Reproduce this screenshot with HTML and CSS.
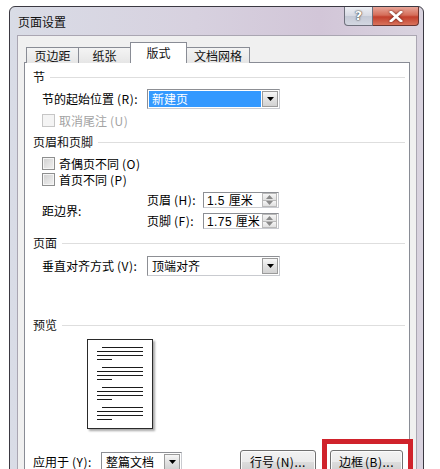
FILE: index.html
```html
<!DOCTYPE html>
<html>
<head>
<meta charset="utf-8">
<title>页面设置</title>
<link rel="stylesheet" href="styles.css">
</head>
<body>
<div class="window">
  <div class="titlebar">
    <span class="title">页面设置</span>
    <div class="controls">
      <div class="btn-help">?</div>
      <div class="btn-close">
        <svg width="14" height="11" viewBox="0 0 14 11"><path d="M2 1 L12 10 M12 1 L2 10" stroke="#fff" stroke-width="2.8" stroke-linecap="square"/></svg>
      </div>
    </div>
  </div>
  <div class="client">
    <div class="tabs">
      <div class="tab t1">页边距</div>
      <div class="tab t2">纸张</div>
      <div class="tab t3 active">版式</div>
      <div class="tab t4">文档网格</div>
    </div>
    <div class="panel">
      <div class="ghead g1"><span>节</span><i class="rule"></i></div>
      <div class="row r-start">
        <span class="label">节的起始位置<span class="mn">(R):</span></span>
        <div class="select">
          <span class="sel-text hl">新建页</span>
          <span class="drop"><svg width="7" height="4" viewBox="0 0 7 4"><path d="M0 0 H7 L3.5 4 Z" fill="#000"/></svg></span>
        </div>
      </div>
      <div class="check-row disabled r-endnote">
        <span class="box"></span><span>取消尾注<span class="mn">(U)</span></span>
      </div>
      <div class="ghead g2"><span>页眉和页脚</span><i class="rule"></i></div>
      <div class="check-row r-odd">
        <span class="box"></span><span>奇偶页不同<span class="mn">(O)</span></span>
      </div>
      <div class="check-row r-first">
        <span class="box"></span><span>首页不同<span class="mn">(P)</span></span>
      </div>
      <div class="margins">
        <span class="label">距边界:</span>
        <div class="spins">
          <div class="spin-row">
            <span class="slabel">页眉<span class="mn">(H):</span></span>
            <div class="spin"><span class="spin-text"><span class="num">1.5 </span>厘米</span><span class="arrows"><span class="up"><svg width="7" height="4" viewBox="0 0 7 4"><path d="M0 4 H7 L3.5 0 Z" fill="#8a8a8a"/></svg></span><span class="down"><svg width="7" height="4" viewBox="0 0 7 4"><path d="M0 0 H7 L3.5 4 Z" fill="#8a8a8a"/></svg></span></span></div>
          </div>
          <div class="spin-row">
            <span class="slabel">页脚<span class="mn">(F):</span></span>
            <div class="spin"><span class="spin-text"><span class="num">1.75 </span>厘米</span><span class="arrows"><span class="up"><svg width="7" height="4" viewBox="0 0 7 4"><path d="M0 4 H7 L3.5 0 Z" fill="#8a8a8a"/></svg></span><span class="down"><svg width="7" height="4" viewBox="0 0 7 4"><path d="M0 0 H7 L3.5 4 Z" fill="#8a8a8a"/></svg></span></span></div>
          </div>
        </div>
      </div>
      <div class="ghead g3"><span>页面</span><i class="rule"></i></div>
      <div class="row r-valign">
        <span class="label">垂直对齐方式<span class="mn">(V):</span></span>
        <div class="select">
          <span class="sel-text">顶端对齐</span>
          <span class="drop"><svg width="7" height="4" viewBox="0 0 7 4"><path d="M0 0 H7 L3.5 4 Z" fill="#000"/></svg></span>
        </div>
      </div>
      <div class="ghead g4"><span>预览</span><i class="rule"></i></div>
      <div class="preview">
        <div class="page">
          <div class="para"><i class="ln first"></i><i class="ln"></i><i class="ln"></i><i class="ln short"></i></div>
          <div class="para"><i class="ln first"></i><i class="ln"></i><i class="ln"></i><i class="ln short"></i></div>
          <div class="para"><i class="ln first"></i><i class="ln"></i><i class="ln"></i><i class="ln short"></i></div>
          <div class="para"><i class="ln first"></i><i class="ln"></i><i class="ln"></i><i class="ln short"></i></div>
        </div>
      </div>
      <div class="bottom">
        <span class="blabel">应用于<span class="mn">(Y):</span></span>
        <div class="select small">
          <span class="sel-text">整篇文档</span>
          <span class="drop"><svg width="7" height="4" viewBox="0 0 7 4"><path d="M0 0 H7 L3.5 4 Z" fill="#000"/></svg></span>
        </div>
        <div class="button b-line">行号<span class="mn">(N)...</span></div>
        <div class="btn-wrap">
          <div class="button b-border">边框<span class="mn">(B)...</span></div>
          <div class="mark"></div>
        </div>
      </div>
    </div>
  </div>
</div>
</body>
</html>
```

FILE: styles.css
```css
* { box-sizing: border-box; }
html, body { margin: 0; padding: 0; }
body {
  width: 440px;
  height: 469px;
  overflow: hidden;
  background: #fff;
  font-family: "Noto Sans CJK SC", "Noto Sans", sans-serif;
  font-size: 12px;
  color: #000;
}
.mn { margin-left: 3px; letter-spacing: 0.5px; }
.num {
  font-family: "Liberation Sans", Arial, sans-serif;
  font-size: 12px;
  letter-spacing: 0.4px;
}
.window {
  margin: 6px 0 0 9px;
  width: 415px;
  height: 480px;
  border: 1px solid #3b3942;
  border-radius: 6px 6px 0 0;
  background: linear-gradient(to right, #d9dce6 0%, #d7d1df 45%, #d2c6d8 75%, #d9d3df 100%);
  display: flex;
  flex-direction: column;
}
.titlebar {
  height: 28px;
  display: flex;
  align-items: flex-start;
}
.title {
  padding: 7px 0 0 8px;
  line-height: 16px;
  color: #111;
}
.controls {
  margin-left: auto;
  margin-right: 4px;
  display: flex;
}
.btn-help {
  width: 29px;
  height: 19px;
  border: 1px solid #6e707c;
  border-top: none;
  border-radius: 0 0 0 4px;
  background: linear-gradient(#eef0f5, #d6d9e2 50%, #c4c9d5 51%, #d3d7e1);
  color: #fff;
  font-family: "DejaVu Sans", sans-serif;
  font-weight: bold;
  font-size: 13px;
  line-height: 18px;
  text-align: center;
  text-shadow: 0 0 2px #333, 0 0 1px #333;
}
.btn-close {
  width: 46px;
  height: 19px;
  border: 1px solid #6b3530;
  border-top: none;
  border-left: none;
  border-radius: 0 0 4px 0;
  background: linear-gradient(#e8a598, #d56e5a 45%, #c23f2c 55%, #d9735c);
  display: flex;
  align-items: center;
  justify-content: center;
}
.btn-close svg { filter: drop-shadow(0 0 1px #5a1a12); }
.client {
  flex: 1;
  margin: 0 6px 0 7px;
  background: #f0f0f0;
  border: 1px solid #aaa6b2;
  padding: 6px 6px 0 6px;
  display: flex;
  flex-direction: column;
}
.tabs {
  height: 21px;
  display: flex;
  align-items: flex-end;
  margin-bottom: -1px;
  padding-left: 2px;
  position: relative;
  z-index: 1;
}
.tab {
  height: 16px;
  border: 1px solid #898c95;
  border-bottom: none;
  background: linear-gradient(#f4f4f4, #e6e6e6);
  text-align: center;
  line-height: 15px;
  margin-left: -1px;
  color: #111;
}
.t1 { width: 53px; margin-left: 0; }
.t2 { width: 53px; }
.t3 { width: 57px; }
.t4 { width: 64px; }
.tab.active {
  height: 21px;
  background: #fff;
  line-height: 20px;
  position: relative;
  z-index: 2;
}
.panel {
  flex: 1;
  background: #fff;
  border: 1px solid #898c95;
  display: flex;
  flex-direction: column;
}
.ghead {
  height: 14px;
  line-height: 14px;
  display: flex;
  align-items: center;
  padding: 0 4px 0 8px;
  color: #111;
}
.ghead .rule {
  flex: 1;
  height: 1px;
  background: #dedede;
  margin-left: 5px;
}
.g1 { margin-top: 7px; }
.g2 { margin-top: 7px; }
.g3 { margin-top: 7px; }
.g4 { margin-top: 42px; }
.row {
  height: 20px;
  display: flex;
  align-items: center;
  padding-left: 17px;
}
.r-start { margin-top: 5px; }
.r-valign { margin-top: 6px; }
.label {
  width: 105px;
  line-height: 16px;
}
.select {
  width: 133px;
  height: 20px;
  border: 1px solid #8d8f94;
  border-right-color: #c9cbd0;
  border-bottom-color: #c9cbd0;
  background: #fff;
  display: flex;
  align-items: center;
  padding: 1px;
}
.sel-text {
  flex: 1;
  height: 16px;
  line-height: 16px;
  padding-left: 3px;
}
.sel-text.hl {
  background: #3399ff;
  color: #fff;
  margin-right: 1px;
}
.drop {
  width: 16px;
  height: 16px;
  border: 1px solid #9b9b9b;
  background: linear-gradient(#f7f7f7, #e2e2e2 50%, #d2d2d2);
  display: flex;
  align-items: center;
  justify-content: center;
}
.check-row {
  height: 15px;
  display: flex;
  align-items: center;
  padding-left: 17px;
  line-height: 15px;
}
.r-endnote { margin-top: 4px; }
.r-odd { margin-top: 7px; }
.r-first { margin-top: 1px; }
.box {
  width: 13px;
  height: 13px;
  border: 1px solid #8e8f8f;
  background: linear-gradient(135deg, #cfcfcf, #f2f2f2);
  box-shadow: inset 0 0 0 1px #f5f5f5;
  margin-right: 4px;
}
.check-row.disabled { color: #a3a3a3; }
.check-row.disabled .box {
  border-color: #c6c6c6;
  background: #f4f4f4;
  box-shadow: none;
}
.margins {
  margin-top: 5px;
  height: 37px;
  display: flex;
  align-items: center;
  padding-left: 17px;
}
.spins {
  display: flex;
  flex-direction: column;
  gap: 5px;
}
.spin-row {
  height: 16px;
  display: flex;
  align-items: center;
}
.slabel {
  width: 56px;
  line-height: 16px;
}
.spin {
  width: 76px;
  height: 16px;
  border: 1px solid #8d8f94;
  border-right-color: #c9cbd0;
  border-bottom-color: #c9cbd0;
  display: flex;
  align-items: center;
}
.spin-text {
  flex: 1;
  min-width: 0;
  padding-left: 3px;
  line-height: 14px;
  font-size: 12px;
  white-space: pre;
}
.arrows {
  width: 15px;
  height: 14px;
  display: flex;
  flex-direction: column;
  margin-right: 1px;
  flex: none;
}
.arrows span {
  flex: 1;
  border: 1px solid #b9b9b9;
  background: linear-gradient(#f6f6f6, #e0e0e0);
  display: flex;
  align-items: center;
  justify-content: center;
}
.arrows .down { border-top: none; }
.preview {
  margin-top: 7px;
  padding-left: 62px;
  height: 90px;
}
.page {
  width: 66px;
  height: 90px;
  border: 1px solid #2a2a2a;
  background: #fff;
  box-shadow: 2px 2px 2px #a8a8a8;
  padding: 7px 0 0 9px;
}
.para { display: flex; flex-direction: column; align-items: flex-start; }
.para + .para { margin-top: 7px; }
.ln {
  display: block;
  width: 46px;
  height: 1px;
  background: #1a1a1a;
}
.ln + .ln { margin-top: 3px; }
.ln.first { width: 41px; margin-left: 5px; }
.ln.short { width: 15px; }
.bottom {
  margin-top: 21px;
  height: 24px;
  display: flex;
  align-items: flex-start;
  padding-left: 8px;
}
.blabel {
  width: 68px;
  margin-top: 2px;
  line-height: 20px;
}
.select.small {
  width: 81px;
  margin-top: 2px;
}
.button {
  height: 23px;
  border: 1px solid #707070;
  border-radius: 3px;
  background: linear-gradient(#f2f2f2, #ebebeb 50%, #dddddd 51%, #cfcfcf);
  box-shadow: inset 0 0 0 1px #fbfbfb;
  text-align: center;
  line-height: 21px;
}
.button .mn { margin-left: 2px; }
.b-line {
  width: 76px;
  margin-left: 58px;
}
.btn-wrap {
  position: relative;
  margin-left: 14px;
}
.b-border { width: 73px; }
.mark {
  position: absolute;
  left: -8px;
  top: -11px;
  width: 91px;
  height: 45px;
  border: 5px solid #d0222b;
}
```
